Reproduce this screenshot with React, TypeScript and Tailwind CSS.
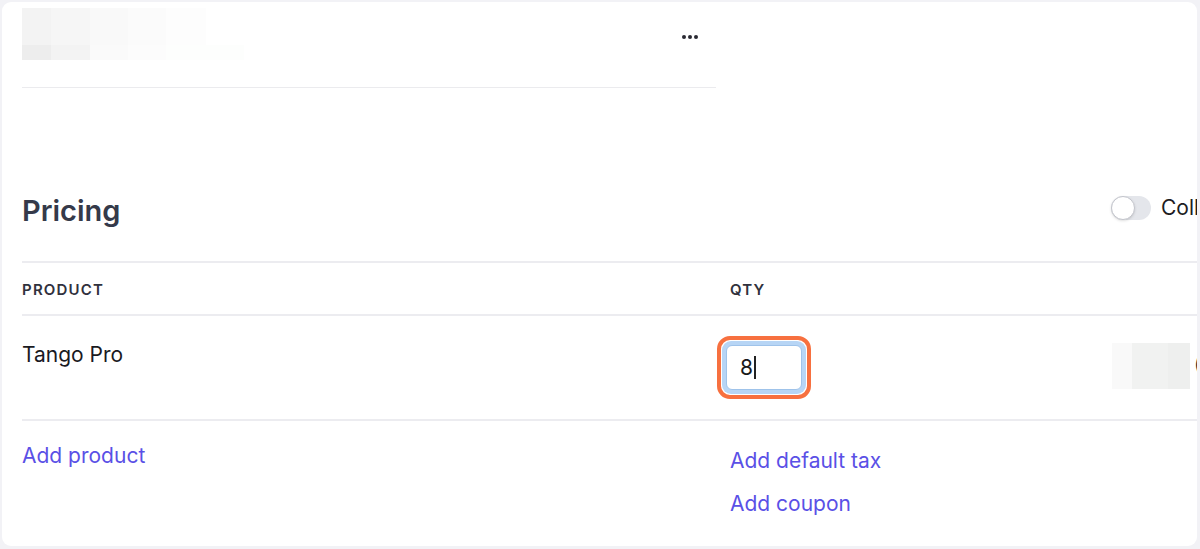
import { FC } from "react"

const font = { fontFamily: "Inter, 'Noto Sans', sans-serif" }

const Blur: FC = () => (
  <div className="flex flex-col w-[222px]">
    <div className="flex h-[37px]">
      <div className="w-[29px] bg-[#f3f3f3]" />
      <div className="w-[39px] bg-[#f6f6f6]" />
      <div className="w-[38px] bg-[#f9f9f9]" />
      <div className="w-[38px] bg-[#fbfbfb]" />
      <div className="w-[40px] bg-[#fdfdfd]" />
    </div>
    <div className="flex h-[15px]">
      <div className="w-[29px] bg-[#ededed]" />
      <div className="w-[39px] bg-[#f3f3f3]" />
      <div className="w-[38px] bg-[#fafafa]" />
      <div className="w-[38px] bg-[#fcfcfc]" />
      <div className="w-[78px] bg-[#fdfefd]" />
    </div>
  </div>
)

const QtyInput: FC = () => (
  <div className="w-[94px] h-[63px] rounded-[13px] border-[4px] border-[#f7703f] bg-white p-[1px]">
    <div className="h-full w-full rounded-[9px] bg-[#b7d5f5] p-[4px]">
      <div className="h-full w-full rounded-[6px] bg-white border border-[#9fc3ea] flex items-center pl-[13px]">
        <span className="text-[21px] text-[#1a1a1a] leading-none">8</span>
        <span className="ml-[1px] h-[23px] w-[1.5px] bg-[#222]" />
      </div>
    </div>
  </div>
)

export default function App() {
  return (
    <div className="w-[1200px] h-[549px] bg-[#f2f2f6] p-[2px] pr-[3px] pb-[3px]" style={font}>
      <div className="h-full w-full bg-white rounded-[9px] overflow-hidden">
        <div className="ml-[20px] w-[694px] h-[86px] border-b border-[#ebebee] flex justify-between pt-[6px]">
          <Blur />
          <div className="flex gap-[2px] pt-[27px] pr-[18px]">
            <span className="w-[4px] h-[4px] rounded-full bg-[#2a2a33]" />
            <span className="w-[4px] h-[4px] rounded-full bg-[#2a2a33]" />
            <span className="w-[4px] h-[4px] rounded-full bg-[#2a2a33]" />
          </div>
        </div>

        <div className="ml-[20px] w-[1260px] mt-[86px]">
          <div className="h-[89px] border-b-2 border-[#ececf0] flex items-start justify-between pt-[17px]">
            <h2 className="text-[29px] font-semibold text-[#353a4a] leading-[40px]">Pricing</h2>
            <div className="flex items-center gap-[10px] w-[171px] pt-[1px]">
              <div className="w-[40px] h-[24px] rounded-full bg-[#e4e6eb] flex items-center">
                <div className="w-[24px] h-[24px] rounded-full bg-white border border-[#c3c5cc] shadow-sm" />
              </div>
              <span className="text-[21px] text-[#1d1d22]">Collection</span>
            </div>
          </div>

          <div className="flex h-[53px] border-b-2 border-[#ececf0] items-center pt-[3px] text-[15px] font-semibold tracking-[0.08em] text-[#30313d]">
            <div className="w-[708px]">PRODUCT</div>
            <div>QTY</div>
          </div>

          <div className="flex h-[105px] border-b-2 border-[#ececf0]">
            <div className="w-[695px] pt-[23px] text-[21px] text-[#1a1a1f]">Tango Pro</div>
            <div className="w-[395px] pt-[20px]">
              <QtyInput />
            </div>
            <div className="pt-[27px] flex">
              <div className="flex h-[46px]">
                <div className="w-[20px] bg-[#f9f9f9]" />
                <div className="w-[36px] bg-[#f1f2f1]" />
                <div className="w-[22px] bg-[#eeefee]" />
              </div>
              <span className="ml-[4px] pt-[8px] text-[19px] text-[#333]">(</span>
            </div>
          </div>

          <div className="flex">
            <div className="w-[708px] pt-[19px]">
              <span className="text-[21px] text-[#5a50e6]">Add product</span>
            </div>
            <div className="flex flex-col pt-[25px] gap-[13px] text-[21px] text-[#5a50e6]">
              <span className="leading-[30px]">Add default tax</span>
              <span className="leading-[30px]">Add coupon</span>
            </div>
          </div>
        </div>
      </div>
    </div>
  )
}
